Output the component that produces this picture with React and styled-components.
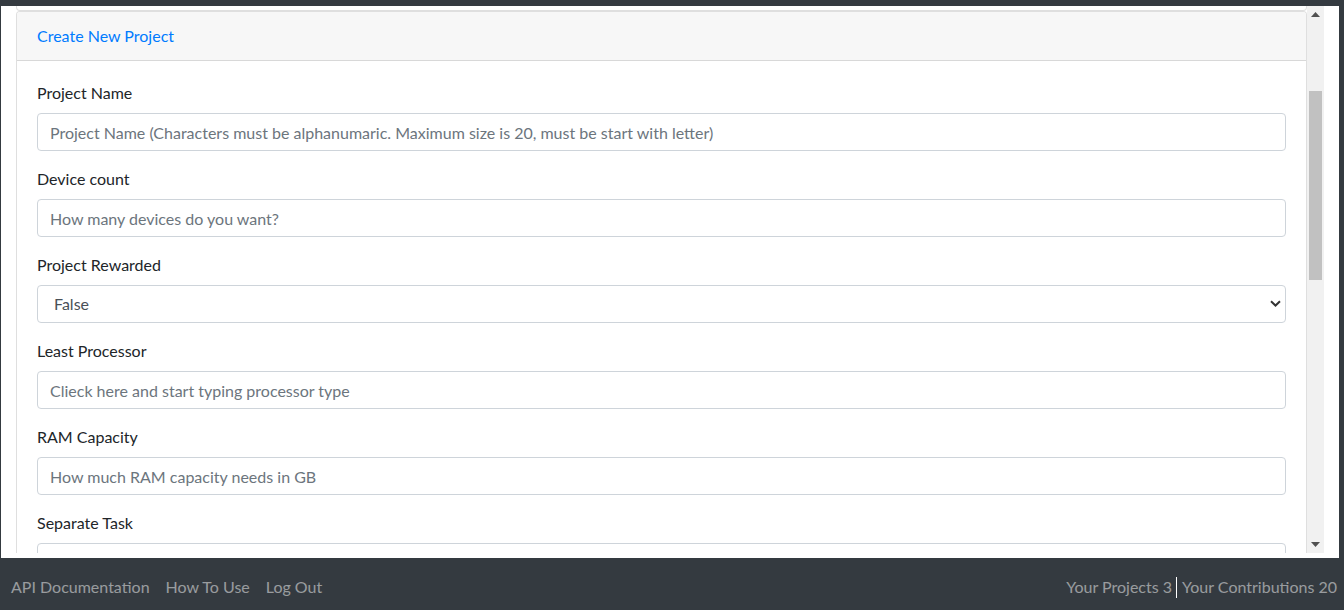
import React from "react";
import styled, { createGlobalStyle } from "styled-components";

const Global = createGlobalStyle`
  html, body { margin: 0; padding: 0; }
  body {
    background: #343a40;
    font-family: Lato, "Open Sans", "Liberation Sans", sans-serif;
    font-size: 16px;
    line-height: 24px;
    color: #212529;
    overflow: hidden;
  }
  * { box-sizing: border-box; }
`;

const Page = styled.div`
  display: flex;
  flex-direction: column;
  height: 610px;
`;

const Panel = styled.main`
  margin: 6px 5px 0 1px;
  height: 552px;
  background: #fff;
  padding: 0 15px 5px 15px;
  display: flex;
`;

const ScrollArea = styled.div`
  flex: 1;
  display: flex;
  overflow: hidden;
`;

const ScrollContent = styled.div`
  flex: 1;
  min-width: 0;
  overflow: hidden;
`;

const PrevCardTail = styled.div`
  height: 5px;
  border: 1px solid rgba(0, 0, 0, 0.125);
  border-top: none;
  border-radius: 0 0 4px 4px;
  background: #fff;
`;

const Card = styled.section`
  border: 1px solid rgba(0, 0, 0, 0.125);
  border-radius: 4px;
  background: #fff;
`;

const CardHeader = styled.div`
  padding: 12px 20px;
  background: #f7f7f7;
  border-bottom: 1px solid rgba(0, 0, 0, 0.125);
  border-radius: 3px 3px 0 0;
`;

const HeaderLink = styled.a`
  color: #007bff;
  text-decoration: none;
`;

const CardBody = styled.div`
  padding: 20px;
`;

const FormGroup = styled.div`
  margin-bottom: 16px;
`;

const Label = styled.label`
  display: block;
  margin-bottom: 8px;
  color: #212529;
`;

const Input = styled.input`
  display: block;
  width: 100%;
  height: 38px;
  padding: 6px 12px;
  font: inherit;
  color: #495057;
  background: #fff;
  border: 1px solid #ced4da;
  border-radius: 4px;
  outline: none;
  &::placeholder { color: #6c757d; opacity: 1; }
`;

const SelectWrap = styled.div`
  position: relative;
`;

const Select = styled.select`
  display: block;
  width: 100%;
  height: 38px;
  padding: 6px 36px 6px 16px;
  font: inherit;
  color: #495057;
  background: #fff;
  border: 1px solid #ced4da;
  border-radius: 4px;
  appearance: none;
  -webkit-appearance: none;
  outline: none;
`;

const Chevron = styled.svg`
  position: absolute;
  right: 5px;
  top: 15px;
  width: 11px;
  height: 7px;
  pointer-events: none;
`;

const Scrollbar = styled.div`
  width: 17px;
  background: #f1f1f1;
  display: flex;
  flex-direction: column;
`;

const ArrowBtn = styled.div`
  height: 17px;
  display: flex;
  align-items: center;
  justify-content: center;
`;

const Track = styled.div`
  flex: 1;
  display: flex;
  flex-direction: column;
  align-items: center;
`;

const Thumb = styled.div`
  width: 13px;
  margin-top: ${(p) => p.$offset}px;
  height: ${(p) => p.$size}px;
  background: #c1c1c1;
`;

const Footer = styled.footer`
  height: 52px;
  display: flex;
  align-items: center;
  justify-content: space-between;
  padding: 6px 0 0 3px;
`;

const NavGroup = styled.nav`
  display: flex;
  align-items: center;
`;

const NavLink = styled.a`
  padding: 0 8px;
  color: rgba(255, 255, 255, 0.5);
  text-decoration: none;
`;

const Stat = styled.span`
  color: rgba(255, 255, 255, 0.5);
  padding: 0 ${(p) => (p.$last ? "7px" : "4px")} 0 ${(p) => (p.$last ? "5px" : "4px")};
`;

const Divider = styled.span`
  width: 1px;
  height: 21px;
  background: #fff;
`;

const fields = [
  { label: "Project Name", placeholder: "Project Name (Characters must be alphanumaric. Maximum size is 20, must be start with letter)" },
  { label: "Device count", placeholder: "How many devices do you want?" },
  { label: "Project Rewarded", select: true },
  { label: "Least Processor", placeholder: "Clieck here and start typing processor type" },
  { label: "RAM Capacity", placeholder: "How much RAM capacity needs in GB" },
  { label: "Separate Task", placeholder: "" },
];

export default function App() {
  return (
    <Page>
      <Global />
      <Panel>
        <ScrollArea>
          <ScrollContent>
            <PrevCardTail />
            <Card>
              <CardHeader>
                <HeaderLink href="#">Create New Project</HeaderLink>
              </CardHeader>
              <CardBody>
                {fields.map((f) => (
                  <FormGroup key={f.label}>
                    <Label>{f.label}</Label>
                    {f.select ? (
                      <SelectWrap>
                        <Select defaultValue="false">
                          <option value="false">False</option>
                          <option value="true">True</option>
                        </Select>
                        <Chevron viewBox="0 0 11 7">
                          <path d="M1 1.2 L5.5 5.5 L10 1.2" fill="none" stroke="#333" strokeWidth="2" />
                        </Chevron>
                      </SelectWrap>
                    ) : (
                      <Input placeholder={f.placeholder} />
                    )}
                  </FormGroup>
                ))}
              </CardBody>
            </Card>
          </ScrollContent>
          <Scrollbar>
            <ArrowBtn>
              <svg width="9" height="5" viewBox="0 0 9 5"><path d="M0 5 L4.5 0 L9 5 Z" fill="#505050" /></svg>
            </ArrowBtn>
            <Track>
              <Thumb $offset={68} $size={189} />
            </Track>
            <ArrowBtn>
              <svg width="9" height="5" viewBox="0 0 9 5"><path d="M0 0 L4.5 5 L9 0 Z" fill="#505050" /></svg>
            </ArrowBtn>
          </Scrollbar>
        </ScrollArea>
      </Panel>
      <Footer>
        <NavGroup>
          <NavLink href="#">API Documentation</NavLink>
          <NavLink href="#">How To Use</NavLink>
          <NavLink href="#">Log Out</NavLink>
        </NavGroup>
        <NavGroup>
          <Stat>Your Projects 3</Stat>
          <Divider />
          <Stat $last>Your Contributions 20</Stat>
        </NavGroup>
      </Footer>
    </Page>
  );
}
